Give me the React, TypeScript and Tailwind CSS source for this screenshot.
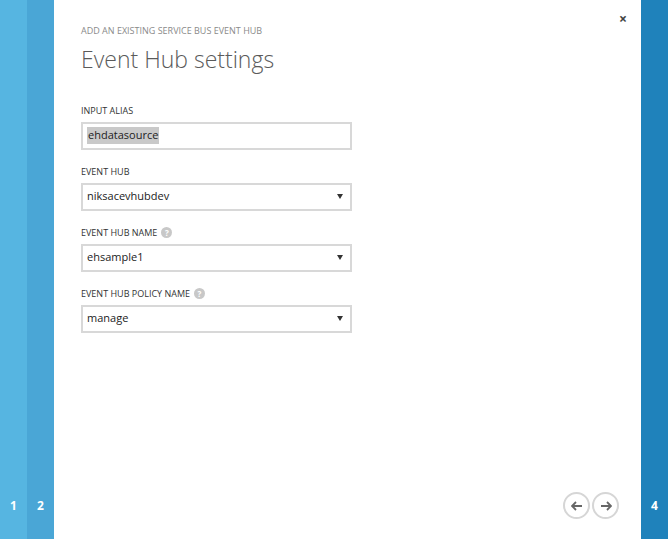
import React from 'react';

const font = { fontFamily: '"Open Sans", "Liberation Sans", sans-serif' };

const HelpIcon = () => (
  <span className="ml-1 inline-flex h-[11px] w-[11px] items-center justify-center rounded-full bg-[#c8c8c8] text-[8px] font-bold leading-none text-white">
    ?
  </span>
);

const Caret = () => (
  <svg width="6" height="5" viewBox="0 0 6 5" className="shrink-0">
    <path d="M0 0 L6 0 L3 5 Z" fill="#333" />
  </svg>
);

const Field = ({
  label,
  help,
  value,
  select,
}: {
  label: string;
  help?: boolean;
  value: string;
  select?: boolean;
}) => (
  <div className="flex flex-col">
    <div className="flex h-[12px] items-center text-[9px] uppercase text-[#333]">
      {label}
      {help && <HelpIcon />}
    </div>
    <div className="mt-[5px] flex h-[28px] w-[271px] items-center justify-between border-2 border-[#d8d8d8] bg-white pl-[4px] pr-[7px] text-[11px] text-[#222]">
      {select ? (
        <span>{value}</span>
      ) : (
        <span className="bg-[#c9c9c9] px-px">{value}</span>
      )}
      {select && <Caret />}
    </div>
  </div>
);

const App = () => {
  return (
    <div className="flex h-[539px] w-[668px] overflow-hidden bg-white" style={font}>
      <div className="flex w-[27px] flex-col justify-end bg-[#56b5e1] pb-[24px] text-center text-[12px] font-bold text-white">
        1
      </div>
      <div className="flex w-[27px] flex-col justify-end bg-[#4aa6d6] pb-[24px] text-center text-[12px] font-bold text-white">
        2
      </div>
      <div className="flex flex-1 flex-col pl-[27px] pr-[14px]">
        <div className="flex items-start justify-between pt-[12px]">
          <div className="pt-[12px] text-[9px] uppercase text-[#8a8a8a]">
            Add an existing service bus event hub
          </div>
          <span className="text-[14px] font-bold leading-none text-[#444]">×</span>
        </div>
        <h1 className="mt-[6px] text-[23px] font-light leading-[30px] text-[#5a5a5a]">
          Event Hub settings
        </h1>
        <div className="mt-[31px] flex flex-col gap-[16px]">
          <Field label="Input alias" value="ehdatasource" />
          <Field label="Event hub" value="niksacevhubdev" select />
          <Field label="Event hub name" value="ehsample1" select help />
          <Field label="Event hub policy name" value="manage" select help />
        </div>
        <div className="mt-auto flex justify-end gap-[2px] pb-[20px] pr-[8px]">
          <div className="flex h-[27px] w-[27px] items-center justify-center rounded-full border-2 border-[#d6d6d6]">
            <svg width="12" height="10" viewBox="0 0 12 10">
              <path d="M11 5 H1.5 M5 1 L1 5 L5 9" stroke="#666" strokeWidth="1.8" fill="none" />
            </svg>
          </div>
          <div className="flex h-[27px] w-[27px] items-center justify-center rounded-full border-2 border-[#d6d6d6]">
            <svg width="12" height="10" viewBox="0 0 12 10">
              <path d="M1 5 H10.5 M7 1 L11 5 L7 9" stroke="#666" strokeWidth="1.8" fill="none" />
            </svg>
          </div>
        </div>
      </div>
      <div className="flex w-[27px] flex-col justify-end bg-[#1f82bb] pb-[24px] text-center text-[12px] font-bold text-white">
        4
      </div>
    </div>
  );
};

export default App;
